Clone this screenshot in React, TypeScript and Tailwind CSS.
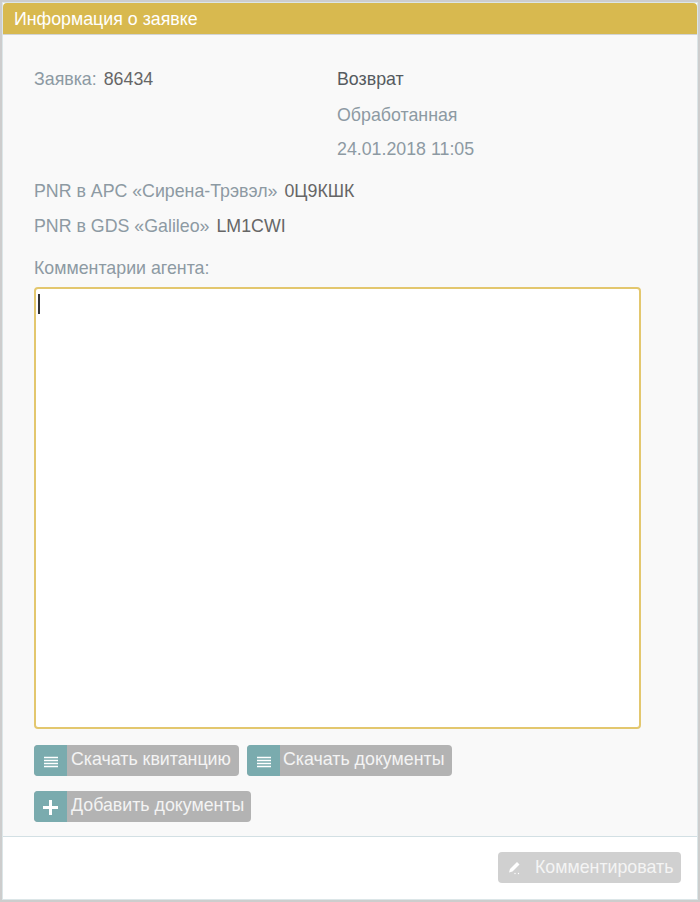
const font = "[font-family:'Liberation_Sans',Arial,sans-serif]";

function LinesIcon() {
  return (
    <svg width="14" height="12" viewBox="0 0 14 12" fill="none" stroke="#fff" strokeWidth="1.3">
      <path d="M0 1.5h14M0 4.5h14M0 7.5h14M0 10.5h14" />
    </svg>
  );
}

function PlusIcon() {
  return (
    <svg width="15" height="15" viewBox="0 0 15 15" fill="#fff">
      <path d="M6 0h3v6h6v3H9v6H6V9H0V6h6z" />
    </svg>
  );
}

function PenIcon() {
  return (
    <svg width="14" height="14" viewBox="0 0 14 14" fill="#fff">
      <path d="M10 1l2.500 2.500-7 7-3.500 1 1-3.500z" />
      <circle cx="8" cy="12.500" r="0.700" />
      <circle cx="11.500" cy="12.500" r="0.700" />
    </svg>
  );
}

function IconButton({ icon, label, width, gap }: { icon: React.ReactNode; label: string; width: string; gap: string }) {
  return (
    <button className={`flex h-[31px] ${width} items-stretch overflow-hidden rounded-[4px] bg-[#b3b3b3] text-left text-[17.8px] text-[#f4f4f4]`}>
      <span className="flex w-[33px] shrink-0 items-center justify-center bg-[#7aabae] pt-[2px]">{icon}</span>
      <span className={`${gap} whitespace-nowrap pt-[2px] leading-[24px]`}>{label}</span>
    </button>
  );
}

export default function App() {
  return (
    <div className={`${font} h-[902px] w-[700px] overflow-hidden border-2 border-[#cdcdcd] bg-white`}>
      <div className="flex h-full flex-col border border-[#dce6e8]">
        <div className="h-[32px] rounded-t-[4px] border-b border-[#d2d4d4] bg-[#d8b94f] pl-[11px] text-[17.8px] leading-[32px] text-white">
          Информация о заявке
        </div>
        <div className="h-[802px] border-b border-[#d3e0e4] bg-[#f9f9f9] pl-[31px] pt-[32px] text-[17.8px] text-[#8d9aa3]">
          <div className="flex h-[106px]">
            <div className="flex w-[303px] gap-[7px] leading-[24px]">
              <span>Заявка:</span>
              <span className="text-[#666666]">86434</span>
            </div>
            <div className="flex flex-col leading-[24px]">
              <span className="text-[#555b60]">Возврат</span>
              <span className="mt-[12px]">Обработанная</span>
              <span className="mt-[10px]">24.01.2018 11:05</span>
            </div>
          </div>
          <div className="mt-[6px] flex gap-[7px] leading-[24px]">
            <span>PNR в АРС «Сирена-Трэвэл»</span>
            <span className="text-[#666666]">0Ц9КШК</span>
          </div>
          <div className="mt-[11px] flex gap-[7px] leading-[24px]">
            <span>PNR в GDS «Galileo»</span>
            <span className="text-[#666666]">LM1CWI</span>
          </div>
          <div className="mt-[18px] leading-[24px]">Комментарии агента:</div>
          <div className="mt-[7px] h-[442px] w-[607px] rounded-[4px] border-2 border-[#e3c76e] bg-white pl-[2px] pt-[5px]">
            <div className="h-[20px] w-[2px] bg-[#333333]" />
          </div>
          <div className="mt-[16px] flex gap-[8px]">
            <IconButton icon={<LinesIcon />} label="Скачать квитанцию" width="w-[205px]" gap="pl-[4px]" />
            <IconButton icon={<LinesIcon />} label="Скачать документы" width="w-[205px]" gap="pl-[3px]" />
          </div>
          <div className="mt-[15px]">
            <IconButton icon={<PlusIcon />} label="Добавить документы" width="w-[217px]" gap="pl-[4px]" />
          </div>
        </div>
        <div className="flex flex-1 items-start justify-end pr-[16px] pt-[15px]">
          <button className="flex h-[31px] w-[183px] items-center rounded-[4px] bg-[#d0d0d0] pl-[9px] text-[17.8px] text-[#f4f4f4]">
            <PenIcon />
            <span className="ml-[14px] whitespace-nowrap">Комментировать</span>
          </button>
        </div>
      </div>
    </div>
  );
}
